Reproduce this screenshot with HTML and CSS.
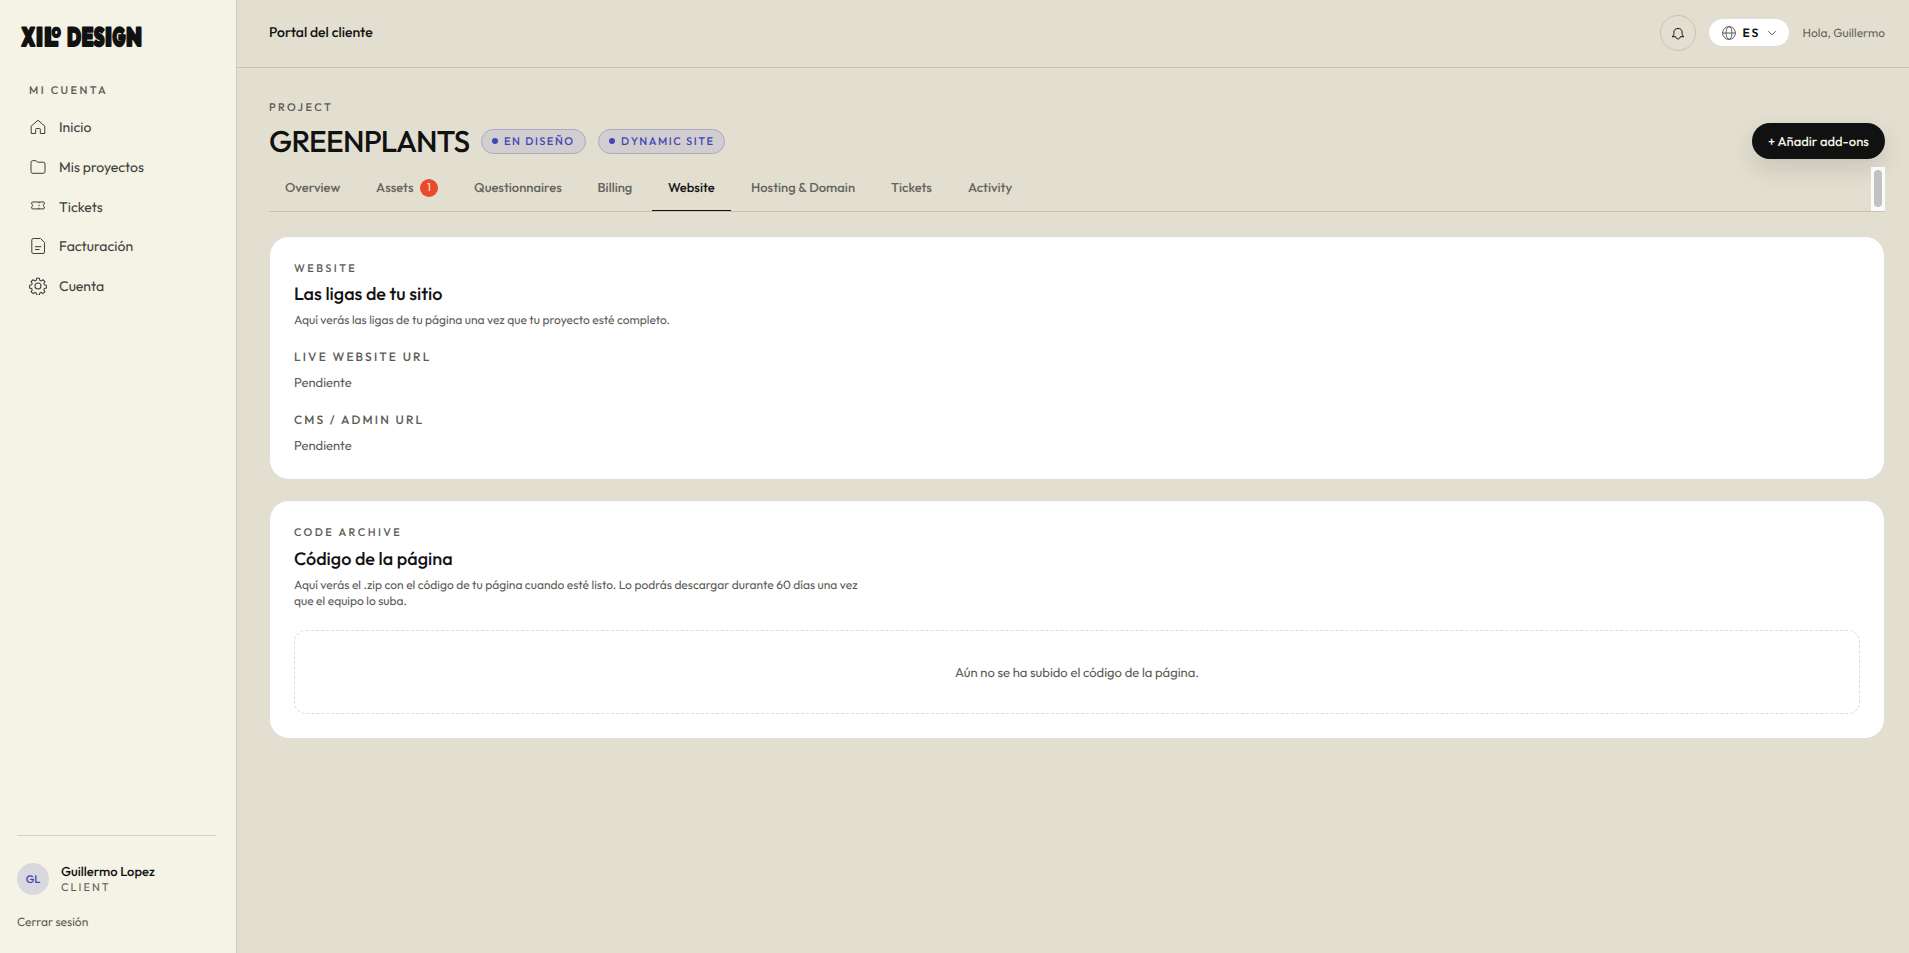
FILE: index.html
```
<!DOCTYPE html>
<html lang="es">
<head>
    <meta charset="UTF-8">
    <meta name="viewport" content="width=device-width, initial-scale=1.0">
    <title>Portal del cliente</title>
    <link rel="stylesheet" href="styles.css">
</head>
<body>
    <div class="app">
        <!-- Sidebar -->
        <aside class="sidebar">
            <svg class="logo" width="126" height="26" viewBox="0 0 126 26" role="img" aria-label="Xilo Design">
                <g class="logo-text">
                    <text x="1.5" y="21.5" textLength="13.5" lengthAdjust="spacingAndGlyphs">X</text>
                    <text x="16" y="21.5" textLength="7" lengthAdjust="spacingAndGlyphs">I</text>
                    <text x="24" y="21.5" textLength="14" lengthAdjust="spacingAndGlyphs">L</text>
                    <text class="logo-small" x="32" y="13" textLength="8.5" lengthAdjust="spacingAndGlyphs">O</text>
                    <text x="47" y="21.5" textLength="14" lengthAdjust="spacingAndGlyphs">D</text>
                    <text x="61.5" y="21.5" textLength="12" lengthAdjust="spacingAndGlyphs">E</text>
                    <text x="73.5" y="21.5" textLength="11" lengthAdjust="spacingAndGlyphs">S</text>
                    <text x="85" y="21.5" textLength="7" lengthAdjust="spacingAndGlyphs">I</text>
                    <text x="92.5" y="21.5" textLength="13" lengthAdjust="spacingAndGlyphs">G</text>
                    <text x="106" y="21.5" textLength="16" lengthAdjust="spacingAndGlyphs">N</text>
                </g>
            </svg>

            <p class="eyebrow sidebar-label">Mi cuenta</p>
            <nav class="side-nav">
                <a class="side-link" href="#">
                    <svg class="icon" viewBox="0 0 18 18"><path d="M2.2 8.2 9 2.2l6.8 6v7.3h-4.5v-4.2a.8.8 0 0 0-.8-.8h-3a.8.8 0 0 0-.8.8v4.2H2.2z"/></svg>
                    <span>Inicio</span>
                </a>
                <a class="side-link" href="#">
                    <svg class="icon" viewBox="0 0 18 18"><path d="M2 4.5a1.8 1.8 0 0 1 1.8-1.8h3.1l1.8 1.5h5.5A1.8 1.8 0 0 1 16 6v7.500a1.8 1.8 0 0 1-1.8 1.8H3.8A1.8 1.8 0 0 1 2 13.500z"/></svg>
                    <span>Mis proyectos</span>
                </a>
                <a class="side-link" href="#">
                    <svg class="icon" viewBox="0 0 18 18"><path d="M3.5 4h11a.8.8 0 0 1 .8.8v1.400a1.300 1.300 0 0 0 0 2.500v1.400a.8.8 0 0 1-.8.8h-11a.8.8 0 0 1-.8-.8V8.700a1.300 1.300 0 0 0 0-2.500V4.800a.8.8 0 0 1 .8-.8zM10 4v1.300M10 6.800v1.400M10 9.700v1.500"/></svg>
                    <span>Tickets</span>
                </a>
                <a class="side-link" href="#">
                    <svg class="icon" viewBox="0 0 18 18"><path d="M4.300 1.500h7.200l4 4v9.500a1.500 1.500 0 0 1-1.500 1.500H4.300A1.500 1.500 0 0 1 2.800 15V3a1.500 1.500 0 0 1 1.500-1.500zM6 9.700h6.400M6 12.500h4.500"/></svg>
                    <span>Facturación</span>
                </a>
                <a class="side-link" href="#">
                    <svg class="icon icon-gear" viewBox="0 0 24 24"><circle cx="12" cy="12" r="4"/><path d="M10.200 1.700h3.600l.6 2.700 1.900.8 2.400-1.500 2.500 2.500-1.500 2.400.8 1.900 2.700.6v3.600l-2.700.6-.8 1.900 1.500 2.400-2.500 2.500-2.400-1.500-1.900.8-.6 2.700h-3.600l-.6-2.700-1.900-.8-2.400 1.500-2.500-2.500 1.500-2.400-.8-1.900-2.700-.6v-3.600l2.700-.6.8-1.900-1.500-2.400 2.500-2.500 2.400 1.500 1.900-.8z"/></svg>
                    <span>Cuenta</span>
                </a>
            </nav>

            <div class="sidebar-footer">
                <div class="user">
                    <div class="avatar">GL</div>
                    <div>
                        <p class="user-name">Guillermo Lopez</p>
                        <p class="user-role">CLIENT</p>
                    </div>
                </div>
                <a class="logout" href="#">Cerrar sesión</a>
            </div>
        </aside>

        <div class="content">
            <!-- Top bar -->
            <header class="topbar">
                <p class="topbar-title">Portal del cliente</p>
                <div class="topbar-actions">
                    <button class="bell" type="button" aria-label="Notificaciones">
                        <svg width="14" height="14" viewBox="0 0 14 14"><path d="M1 10.700c1.300-.7 1.900-1.700 1.900-3.300V6.100C2.900 3.900 4.500 2.500 7 2.500s4.100 1.400 4.100 3.600v1.300c0 1.600.6 2.600 1.900 3.300H9.300C9.100 12.100 8.200 12.900 7 12.900s-2.100-.8-2.300-2.200z"/></svg>
                    </button>
                    <button class="lang" type="button">
                        <svg width="14" height="14" viewBox="0 0 14 14"><circle cx="7" cy="7" r="6.400"/><ellipse cx="7" cy="7" rx="2.900" ry="6.400"/><path d="M.6 7h12.800"/></svg>
                        <span>ES</span>
                        <svg class="chevron" width="10" height="10" viewBox="0 0 10 10"><path d="M1.300 3.200 5 6.900l3.700-3.700"/></svg>
                    </button>
                    <span class="greeting">Hola, Guillermo</span>
                </div>
            </header>

            <main class="main">
                <p class="eyebrow">Project</p>
                <div class="project-head">
                    <h1>GREENPLANTS</h1>
                    <span class="pill pill-status">EN DISEÑO</span>
                    <span class="pill pill-type">DYNAMIC SITE</span>
                    <button class="btn" type="button">+ Añadir add-ons</button>
                </div>

                <nav class="tabs">
                    <a class="tab tab-overview" href="#">Overview</a>
                    <a class="tab tab-assets" href="#">Assets <span class="count">1</span></a>
                    <a class="tab tab-questionnaires" href="#">Questionnaires</a>
                    <a class="tab tab-billing" href="#">Billing</a>
                    <a class="tab tab-website active" href="#">Website</a>
                    <a class="tab tab-hosting" href="#">Hosting &amp; Domain</a>
                    <a class="tab tab-tickets" href="#">Tickets</a>
                    <a class="tab tab-activity" href="#">Activity</a>
                    <div class="scrollbar"><div class="thumb"></div></div>
                </nav>

                <!-- Website links -->
                <section class="card card-links">
                    <p class="eyebrow">Website</p>
                    <h2>Las ligas de tu sitio</h2>
                    <p class="description">Aquí verás las ligas de tu página una vez que tu proyecto esté completo.</p>
                    <dl class="links">
                        <dt>LIVE WEBSITE URL</dt>
                        <dd>Pendiente</dd>
                        <dt>CMS / ADMIN URL</dt>
                        <dd>Pendiente</dd>
                    </dl>
                </section>

                <!-- Code archive -->
                <section class="card card-code">
                    <p class="eyebrow">Code archive</p>
                    <h2>Código de la página</h2>
                    <p class="description">Aquí verás el .zip con el código de tu página cuando esté listo. Lo podrás descargar durante 60 días una vez que el equipo lo suba.</p>
                    <div class="empty">Aún no se ha subido el código de la página.</div>
                </section>
            </main>
        </div>
    </div>
</body>
</html>
```
FILE: styles.css
```
/* Global Styles */
* {
    box-sizing: border-box;
}

body {
    font-family: Outfit, Lato, sans-serif;
    margin: 0;
    background-color: #e2dfd0;
    color: #111;
    text-rendering: geometricPrecision;
}

p, h1, h2, dl, dd {
    margin: 0;
}

a {
    color: inherit;
    text-decoration: none;
}

button {
    font-family: inherit;
    text-rendering: inherit;
}

svg {
    fill: none;
    stroke: currentColor;
    flex-shrink: 0;
}

.app {
    display: flex;
    min-height: 100vh;
}

.eyebrow {
    font-size: 11px;
    line-height: 16px;
    font-weight: 500;
    letter-spacing: 0.22em;
    text-transform: uppercase;
    color: #5c5b55;
}

/* Sidebar */
.sidebar {
    display: flex;
    flex-direction: column;
    width: 237px;
    padding: 24px 20px 21px 17px;
    background: #f5f2e6;
    border-right: 1px solid #cdcabc;
}

.logo {
    margin-left: 3px;
    overflow: visible;
}

.logo-text {
    font-size: 26px;
    font-weight: 900;
    fill: #111;
    stroke: #111;
    stroke-width: 1.8;
    stroke-linejoin: round;
}

.logo-small {
    font-size: 13px;
}

.sidebar-label {
    margin: 32px 0 0 12px;
}

.side-nav {
    display: flex;
    flex-direction: column;
    margin-top: 9.5px;
    padding-left: 12px;
}

.side-link {
    display: flex;
    align-items: center;
    gap: 12px;
    height: 39.65px;
    font-size: 14px;
    color: #3f3e3a;
}

.icon {
    width: 18px;
    height: 18px;
}

.icon-gear {
    stroke-width: 1.4;
}

.sidebar-footer {
    margin-top: auto;
    padding-top: 27px;
    border-top: 1px solid #d3d1c4;
}

.user {
    display: flex;
    align-items: center;
    gap: 12px;
}

.avatar {
    display: flex;
    align-items: center;
    justify-content: center;
    width: 32px;
    height: 32px;
    border-radius: 50%;
    background: #d9d8de;
    color: #3f48b5;
    font-size: 11px;
    font-weight: 500;
}

.user-name {
    font-size: 13px;
    line-height: 16px;
    font-weight: 500;
}

.user-role {
    font-size: 11px;
    line-height: 15px;
    letter-spacing: 0.18em;
    color: #5c5b55;
}

.logout {
    display: block;
    margin-top: 19px;
    font-size: 12px;
    line-height: 18px;
    color: #5c5b55;
}

/* Top bar */
.content {
    flex: 1;
    min-width: 0;
}

.topbar {
    display: flex;
    align-items: center;
    justify-content: space-between;
    height: 68px;
    padding: 0 24px 2px 32px;
    border-bottom: 1px solid #c6c3b3;
}

.topbar-title {
    padding-bottom: 2px;
    font-size: 14px;
    font-weight: 500;
}

.topbar-actions {
    display: flex;
    align-items: center;
}

.bell {
    display: flex;
    align-items: center;
    justify-content: center;
    width: 36px;
    height: 36px;
    padding: 0;
    border: 1px solid #c6c3b3;
    border-radius: 50%;
    background: none;
    color: #111;
}

.lang {
    display: flex;
    align-items: center;
    width: 82px;
    height: 29px;
    margin: 0 12px;
    padding: 0 12px 0 13px;
    border: 1px solid #dddde0;
    border-radius: 15px;
    background: #fff;
    color: #5c5b55;
}

.lang span {
    margin-left: 6px;
    padding-top: 1px;
    font-size: 12px;
    font-weight: 600;
    letter-spacing: 0.16em;
    color: #111;
}

.chevron {
    margin-left: auto;
}

.greeting {
    padding-top: 1px;
    font-size: 12px;
    color: #65645d;
}

/* Project header */
.main {
    padding: 31px 24px 0 32px;
}

.project-head {
    display: flex;
    align-items: center;
    height: 36px;
    margin-top: 8px;
}

.project-head h1 {
    width: 212px;
    font-size: 30px;
    line-height: 36px;
    font-weight: 500;
    letter-spacing: -0.025em;
    white-space: nowrap;
}

.pill {
    display: flex;
    align-items: center;
    height: 25px;
    margin-right: 12px;
    padding-left: 10px;
    border: 1px solid #a9a9c6;
    border-radius: 13px;
    background: #d2cecf;
    color: #3f48b5;
    font-size: 11px;
    font-weight: 500;
    letter-spacing: 0.14em;
    white-space: nowrap;
}

.pill::before {
    content: "";
    width: 6px;
    height: 6px;
    margin-right: 6px;
    border-radius: 50%;
    background: #3f48b5;
}

.pill-status {
    width: 105px;
}

.pill-type {
    width: 127px;
}

.btn {
    width: 133px;
    height: 36px;
    margin-left: auto;
    padding: 1px 0 0;
    border: none;
    border-radius: 18px;
    background: #111;
    color: #f5f2e6;
    font-size: 13px;
    font-weight: 500;
    box-shadow: 0 10px 24px rgba(17, 17, 17, 0.12);
}

/* Tabs */
.tabs {
    display: flex;
    gap: 4px;
    height: 45px;
    margin-top: 8px;
    border-bottom: 1px solid #c6c3b3;
}

.tab {
    display: flex;
    align-items: center;
    height: 44px;
    padding: 0 16px 1px;
    font-size: 13px;
    font-weight: 500;
    white-space: nowrap;
    color: #65645d;
    border-bottom: 1px solid transparent;
}

.tab.active {
    color: #111;
    border-bottom-color: #111;
}

.tab-overview { width: 87px; }
.tab-assets { width: 94px; }
.tab-questionnaires { width: 119.5px; }
.tab-billing { width: 66.5px; }
.tab-website { width: 79px; }
.tab-hosting { width: 136px; }
.tab-tickets { width: 73px; }
.tab-activity { width: 76px; }

.count {
    width: 18px;
    height: 18px;
    margin-left: auto;
    border-radius: 50%;
    background: #ea4a2a;
    color: #f5f2e6;
    font-size: 11px;
    font-weight: 400;
    line-height: 17px;
    text-align: center;
}

.scrollbar {
    width: 14px;
    height: 44px;
    margin-left: auto;
    padding: 3px;
    background: #fafafa;
}

.thumb {
    width: 8px;
    height: 37px;
    border-radius: 4px;
    background: #c1c1c1;
}

/* Cards */
.card {
    padding: 23px 24px;
    background: #fff;
    border: 1px solid #dedee0;
    border-radius: 20px;
}

.card-links {
    height: 244px;
    margin-top: 24px;
}

.card-code {
    height: 239px;
    margin-top: 20px;
}

.card h2 {
    margin-top: 6px;
    font-size: 18px;
    line-height: 24px;
    font-weight: 500;
}

.card-code h2 {
    margin-top: 7px;
}

.description {
    max-width: 576px;
    margin-top: 7px;
    font-size: 12px;
    line-height: 16px;
    color: #5c5b55;
}

.links dt {
    margin-top: 20px;
    font-size: 12px;
    line-height: 18px;
    font-weight: 500;
    letter-spacing: 0.18em;
    color: #5c5b55;
}

.links dd {
    margin-top: 7px;
    font-size: 13px;
    line-height: 18px;
    color: #5c5b55;
}

.empty {
    display: flex;
    align-items: center;
    justify-content: center;
    height: 84px;
    margin-top: 20px;
    padding-top: 1px;
    border: 1px dashed #dcdcdc;
    border-radius: 12px;
    font-size: 13px;
    color: #5c5b55;
}
```
